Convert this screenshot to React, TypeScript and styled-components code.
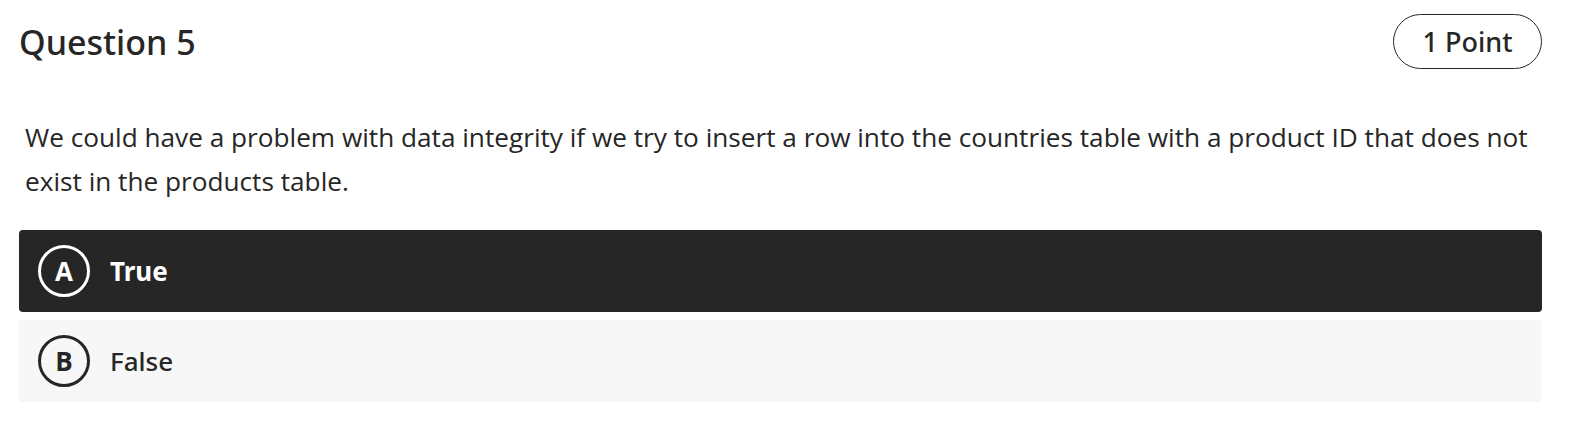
import React from "react";
import styled, { createGlobalStyle } from "styled-components";

const Global = createGlobalStyle`
  html, body { margin: 0; padding: 0; background: #ffffff; }
  body { font-family: "Open Sans", "Noto Sans", sans-serif; color: #262626; }
`;

const Page = styled.div`
  width: 1523px;
  margin-left: 19px;
  padding-top: 14px;
`;

const Header = styled.div`
  display: flex;
  align-items: center;
  justify-content: space-between;
`;

const Title = styled.h2`
  margin: 0;
  font-family: "Noto Sans", "Open Sans", sans-serif;
  font-size: 34px;
  font-weight: 500;
  line-height: 40px;
  color: #262626;
`;

const Pill = styled.div`
  box-sizing: border-box;
  height: 55px;
  width: 149px;
  border: 1px solid #262626;
  border-radius: 28px;
  display: flex;
  align-items: center;
  justify-content: center;
  font-family: "Noto Sans", "Open Sans", sans-serif;
  font-size: 27px;
  font-weight: 500;
  color: #262626;
`;

const Prompt = styled.p`
  margin: 46px 0 0 0;
  padding-left: 6px;
  font-size: 26.2px;
  line-height: 44px;
  color: #262626;
`;

const Options = styled.div`
  display: flex;
  flex-direction: column;
  gap: 8px;
  margin-top: 27px;
`;

const Option = styled.div<{ $selected?: boolean }>`
  box-sizing: border-box;
  height: 82px;
  border-radius: 4px;
  padding-left: 19px;
  display: flex;
  align-items: center;
  gap: 20px;
  background: ${(p) => (p.$selected ? "#262626" : "#f7f7f7")};
  color: ${(p) => (p.$selected ? "#ffffff" : "#262626")};
`;

const Letter = styled.span<{ $selected?: boolean }>`
  box-sizing: border-box;
  width: 52px;
  height: 52px;
  border-radius: 50%;
  border: 3px solid ${(p) => (p.$selected ? "#ffffff" : "#262626")};
  display: flex;
  align-items: center;
  justify-content: center;
  font-size: 26px;
  font-weight: 700;
`;

const Label = styled.span<{ $selected?: boolean }>`
  font-family: "Noto Sans", "Open Sans", sans-serif;
  font-size: 26px;
  font-weight: ${(p) => (p.$selected ? 700 : 500)};
`;

const options = [
  { letter: "A", text: "True", selected: true },
  { letter: "B", text: "False", selected: false },
];

export default function App() {
  return (
    <>
      <Global />
      <Page>
        <Header>
          <Title>Question 5</Title>
          <Pill>1 Point</Pill>
        </Header>
        <Prompt>
          We could have a problem with data integrity if we try to insert a row into the countries table with a product ID that does not exist in the products table.
        </Prompt>
        <Options>
          {options.map((o) => (
            <Option key={o.letter} $selected={o.selected}>
              <Letter $selected={o.selected}>{o.letter}</Letter>
              <Label $selected={o.selected}>{o.text}</Label>
            </Option>
          ))}
        </Options>
      </Page>
    </>
  );
}
